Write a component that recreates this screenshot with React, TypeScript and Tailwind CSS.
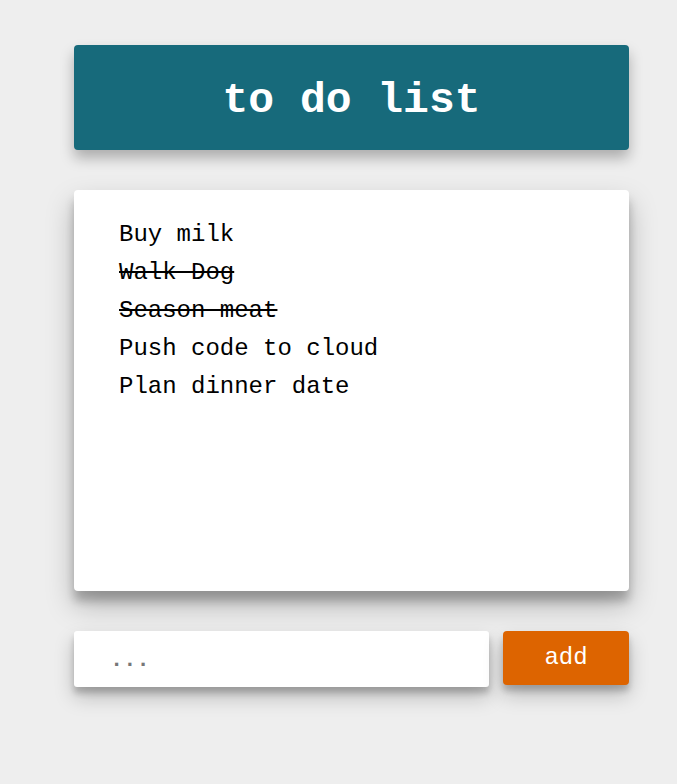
import React from "react";

const items = [
  { text: "Buy milk", done: false },
  { text: "Walk Dog", done: true },
  { text: "Season meat", done: true },
  { text: "Push code to cloud", done: false },
  { text: "Plan dinner date", done: false },
];

export default function App() {
  const mono = { fontFamily: '"Liberation Mono", "Courier New", monospace' };
  return (
    <div className="min-h-[784px] w-full bg-[#eeeeee]" style={mono}>
      <div className="ml-[74px] w-[555px] pt-[45px]">
        <div className="flex h-[105px] items-center justify-center rounded-[4px] bg-[#176a7b] pt-[6px] shadow-[0_8px_14px_rgba(0,0,0,0.28)]">
          <h1 className="text-[43px] font-bold leading-none text-white">to do list</h1>
        </div>
        <div className="mt-[40px] h-[401px] rounded-[4px] bg-white pl-[45px] pt-[26px] shadow-[0_14px_28px_rgba(0,0,0,0.25),0_10px_10px_rgba(0,0,0,0.22)]">
          <ul>
            {items.map((it) => (
              <li
                key={it.text}
                className={`h-[38px] text-[24px] leading-[38px] text-black ${it.done ? "line-through" : ""}`}
              >
                {it.text}
              </li>
            ))}
          </ul>
        </div>
        <div className="mt-[40px] flex items-start gap-[14px]">
          <input
            className="h-[56px] w-[415px] rounded-[3px] bg-white pl-[36px] pt-[3px] text-[22px] text-black shadow-[0_10px_20px_rgba(0,0,0,0.22),0_6px_6px_rgba(0,0,0,0.2)] outline-none placeholder:font-bold placeholder:text-[#777777]"
            placeholder="..."
            style={mono}
          />
          <button
            className="h-[54px] w-[126px] rounded-[4px] bg-[#dd6400] text-[24px] text-white shadow-[0_10px_20px_rgba(0,0,0,0.22),0_6px_6px_rgba(0,0,0,0.2)]"
            style={mono}
          >
            add
          </button>
        </div>
      </div>
    </div>
  );
}
